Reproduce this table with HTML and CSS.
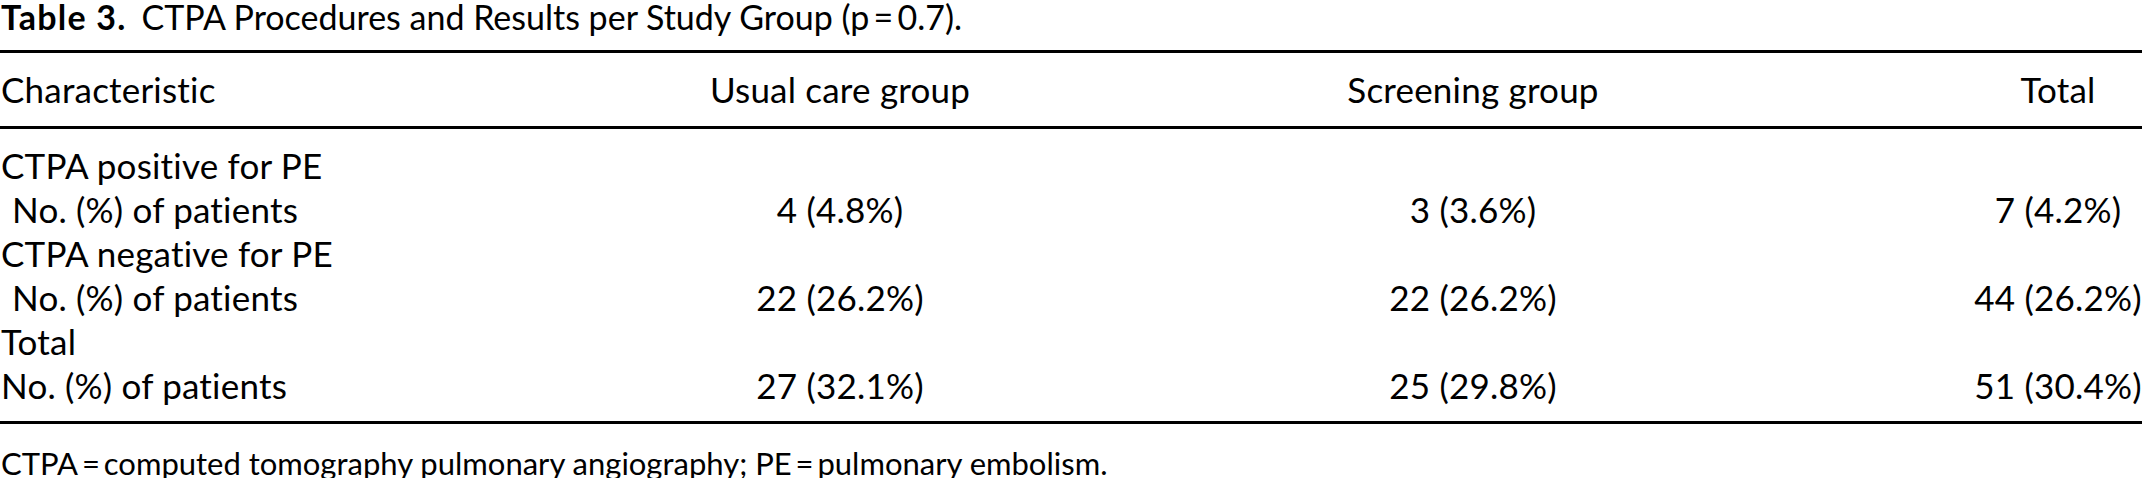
FILE: index.html
```html
<!DOCTYPE html>
<html lang="en">
<head>
<meta charset="utf-8">
<title>Table 3</title>
<link rel="stylesheet" href="styles.css">
</head>
<body>
<div class="page">
  <div class="title"><span class="label">Table 3.</span>CTPA Procedures and Results per Study Group (p&#8201;=&#8201;0.7).</div>
  <table class="data">
    <colgroup>
      <col class="c1">
      <col class="c2">
      <col class="c3">
      <col class="c4">
    </colgroup>
    <thead>
      <tr>
        <th class="left">Characteristic</th>
        <th>Usual care group</th>
        <th>Screening group</th>
        <th class="last">Total</th>
      </tr>
    </thead>
    <tbody>
      <tr>
        <td class="left">CTPA positive for PE</td>
        <td></td>
        <td></td>
        <td class="last"></td>
      </tr>
      <tr>
        <td class="left indent">No. (%) of patients</td>
        <td>4 (4.8%)</td>
        <td>3 (3.6%)</td>
        <td class="last">7 (4.2%)</td>
      </tr>
      <tr>
        <td class="left">CTPA negative for PE</td>
        <td></td>
        <td></td>
        <td class="last"></td>
      </tr>
      <tr>
        <td class="left indent">No. (%) of patients</td>
        <td>22 (26.2%)</td>
        <td>22 (26.2%)</td>
        <td class="last">44 (26.2%)</td>
      </tr>
      <tr>
        <td class="left">Total</td>
        <td></td>
        <td></td>
        <td class="last"></td>
      </tr>
      <tr>
        <td class="left">No. (%) of patients</td>
        <td>27 (32.1%)</td>
        <td>25 (29.8%)</td>
        <td class="last">51 (30.4%)</td>
      </tr>
    </tbody>
  </table>
  <div class="note">CTPA&#8201;=&#8201;computed tomography pulmonary angiography; PE&#8201;=&#8201;pulmonary embolism.</div>
</div>
</body>
</html>
```

FILE: styles.css
```css
html, body {
  margin: 0;
  padding: 0;
  background: #ffffff;
}

body {
  font-family: "Lato", "Open Sans", "Liberation Sans", sans-serif;
  color: #000000;
}

.page {
  width: 2142px;
}

.title {
  font-size: 34px;
  line-height: 34px;
  height: 34px;
  margin: 0 0 16px 0;
  padding-left: 1px;
  white-space: nowrap;
}

.title .label {
  font-weight: 700;
  letter-spacing: 1.2px;
  margin-right: 15px;
}

.data {
  width: 2142px;
  table-layout: fixed;
  border-collapse: collapse;
  border-spacing: 0;
  font-size: 35px;
  letter-spacing: 0.2px;
}

.c1 { width: 600px; }
.c2 { width: 480px; }
.c3 { width: 786px; }
.c4 { width: 276px; }

.data th,
.data td {
  padding: 0;
  text-align: center;
  white-space: nowrap;
  font-weight: 400;
  line-height: 44px;
  vertical-align: baseline;
}

.data thead tr {
  border-top: 3px solid #000;
  border-bottom: 3px solid #000;
}

.data thead th {
  line-height: 40px;
  padding-top: 16px;
  padding-bottom: 17px;
}

.data .left {
  text-align: left;
  padding-left: 1px;
}

.data .indent {
  padding-left: 12px;
}

.data .last {
  padding-left: 108px;
}

.data tbody tr:first-child td {
  padding-top: 14px;
}

.data tbody tr:last-child td {
  padding-bottom: 14px;
}

.data tbody tr:last-child {
  border-bottom: 3px solid #000;
}

.note {
  font-size: 31px;
  line-height: 30px;
  margin-top: 24px;
  padding-left: 1px;
  white-space: nowrap;
}
```
